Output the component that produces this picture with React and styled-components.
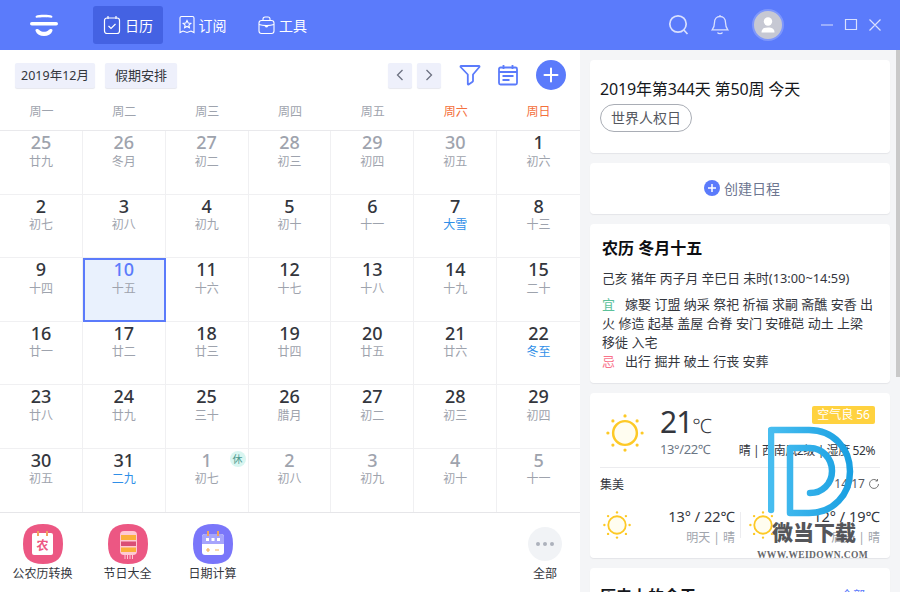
import React from 'react';
import styled, { createGlobalStyle } from 'styled-components';

const BLUE = '#5b7bfb';

const GlobalStyle = createGlobalStyle`
  html, body {
    margin: 0;
    padding: 0;
    width: 900px;
    height: 592px;
    overflow: hidden;
    background: #fff;
    font-family: "Noto Sans", "Noto Sans CJK SC", sans-serif;
    color: #33363d;
  }
  * { box-sizing: border-box; }
`;

const Page = styled.div`
  position: relative;
  width: 900px;
  height: 592px;
  overflow: hidden;
  display: flex;
  flex-direction: column;
`;

const TopBar = styled.header`
  height: 50px;
  flex: none;
  background: ${BLUE};
  display: flex;
  align-items: center;
  padding-left: 30px;
  color: #fff;
`;

const Logo = styled.svg`
  width: 28px;
  height: 24px;
  margin-right: 35px;
`;

const NavItem = styled.div`
  width: ${(p) => p.$w}px;
  height: 38px;
  border-radius: 3px;
  background: ${(p) => (p.$active ? '#4462e3' : 'transparent')};
  display: flex;
  align-items: center;
  justify-content: center;
  gap: 4px;
  font-size: 14px;
`;

const TopRight = styled.div`
  margin-left: auto;
  display: flex;
  align-items: center;
  padding-right: 19px;
`;

const SearchIcon = styled.svg`
  width: 22px;
  height: 24px;
  margin-right: 21px;
`;

const Avatar = styled.div`
  width: 32px;
  height: 32px;
  border-radius: 50%;
  background: #c6c8d3;
  border: 2px solid #7e97fb;
  display: flex;
  align-items: center;
  justify-content: center;
  margin: 0 37px 0 23px;
`;

const Body = styled.div`
  flex: 1;
  display: flex;
  min-height: 0;
`;

const Left = styled.main`
  width: 580px;
  flex: none;
  display: flex;
  flex-direction: column;
`;

const Toolbar = styled.div`
  height: 50px;
  flex: none;
  display: flex;
  align-items: center;
  padding: 0 14px 0 15px;
`;

const Tag = styled.div`
  height: 25px;
  width: ${(p) => p.$w}px;
  text-align: center;
  background: #eef0fb;
  border-radius: 2px;
  font-size: ${(p) => p.$size}px;
  line-height: 25px;
  margin-right: 10px;
  white-space: nowrap;
  box-shadow: 0 1px 1px #e6e7ee;
`;

const ArrowButton = styled.div`
  width: 24px;
  height: 25px;
  background: #eef0fb;
  border-radius: 2px;
  margin-left: ${(p) => p.$ml}px;
  display: flex;
  align-items: center;
  justify-content: center;
  box-shadow: 0 1px 1px #e6e7ee;
`;

const PlusButton = styled.div`
  width: 30px;
  height: 30px;
  border-radius: 50%;
  background: ${BLUE};
  margin-left: 17px;
  display: flex;
  align-items: center;
  justify-content: center;
`;

const Spacer = styled.div`
  flex: 1;
`;

const ToolIcon = styled.svg`
  width: 22px;
  height: 22px;
  margin-left: ${(p) => p.$ml}px;
`;

const Weekdays = styled.div`
  height: 31px;
  flex: none;
  display: grid;
  grid-template-columns: repeat(7, 1fr);
  border-bottom: 1px solid #e9e9ec;
`;

const Weekday = styled.div`
  text-align: center;
  font-size: 12px;
  line-height: 23px;
  color: ${(p) => (p.$weekend ? '#f4703c' : '#9ea3ad')};
`;

const Grid = styled.div`
  height: 382px;
  flex: none;
  display: grid;
  grid-template-columns: repeat(7, 1fr);
  grid-template-rows: repeat(6, 1fr);
  border-bottom: 1px solid #e6e6e9;
`;

const Cell = styled.div`
  position: relative;
  text-align: center;
  border-right: 1px solid #f0f0f2;
  border-bottom: 1px solid #f0f0f2;
  &:nth-child(7n) { border-right: none; }
  &:nth-last-child(-n + 7) { border-bottom: none; }
  ${(p) => p.$selected && `
    background: #e9f1fd;
    outline: 2px solid ${BLUE};
    outline-offset: -2px;
  `}
`;

const DayNumber = styled.div`
  font-size: 18px;
  line-height: 22px;
  font-weight: 500;
  color: ${(p) => (p.$selected ? BLUE : p.$muted ? '#9ea3ad' : '#33363d')};
`;

const Lunar = styled.div`
  margin-top: 0.5px;
  font-size: 12px;
  line-height: 16px;
  color: ${(p) => (p.$term ? '#2f8fe8' : '#9ea3ad')};
`;

const Rest = styled.div`
  position: absolute;
  top: 2px;
  right: 2px;
  width: 16px;
  height: 16px;
  border-radius: 50%;
  background: #d9f6f1;
  color: #4f9b90;
  font-size: 10px;
  line-height: 16px;
`;

const Shortcuts = styled.div`
  flex: 1;
  display: flex;
  padding-top: 11px;
`;

const Shortcut = styled.div`
  width: ${(p) => p.$w || 85}px;
  margin-left: ${(p) => (p.$end ? 'auto' : '0')};
  margin-right: ${(p) => (p.$end ? '10px' : '0')};
  display: flex;
  flex-direction: column;
  align-items: center;
  font-size: 12px;
  line-height: 17px;
  gap: 1px;
`;

const MoreCircle = styled.div`
  width: 34px;
  height: 34px;
  margin: 3px 0 3px;
  border-radius: 50%;
  background: #f1f3f6;
  display: flex;
  align-items: center;
  justify-content: center;
  gap: 3px;
`;

const Dot = styled.i`
  width: 4px;
  height: 4px;
  border-radius: 50%;
  background: #adb2bc;
`;

const Right = styled.aside`
  position: relative;
  flex: 1;
  background: #f4f5f7;
  padding: 10px 10px 0;
  display: flex;
  flex-direction: column;
  gap: 10px;
  overflow: hidden;
`;

const Thumb = styled.div`
  position: absolute;
  top: 0;
  right: 0;
  width: 4px;
  height: 327px;
  background: #c9c9c9;
`;

const Card = styled.section`
  flex: none;
  height: ${(p) => p.$h}px;
  background: #fff;
  border-radius: 4px;
  box-shadow: 0 1px 1px #e4e5e8;
  padding: ${(p) => p.$pad || '0'};
`;

const TodayLine = styled.div`
  font-size: 16px;
  line-height: 22px;
  letter-spacing: -0.15px;
  color: #15171c;
  white-space: nowrap;
`;

const Chip = styled.div`
  display: inline-block;
  height: 28px;
  margin-top: 4px;
  padding: 0 10px;
  border: 1px solid #a9adb5;
  border-radius: 14px;
  font-size: 14px;
  line-height: 26px;
  color: #55585f;
`;

const CreateRow = styled.div`
  height: 100%;
  display: flex;
  align-items: center;
  justify-content: center;
  gap: 4px;
  padding: 0 0 2px 4px;
  font-size: 14px;
  color: #6d7690;
`;

const LunarTitle = styled.div`
  font-size: 16px;
  line-height: 20px;
  font-weight: 700;
  color: #0d0e12;
`;

const LunarLine = styled.div`
  margin-top: 11px;
  font-size: 12.8px;
  line-height: 18px;
  white-space: nowrap;
`;

const Almanac = styled.div`
  margin-top: 8px;
  font-size: 13px;
  line-height: 19px;
`;

const Mark = styled.span`
  color: ${(p) => p.$c};
  margin-right: 10px;
`;

const WeatherTop = styled.div`
  height: 75px;
  display: flex;
  border-bottom: 1px solid #ececef;
`;

const SunBox = styled.div`
  width: 60px;
  display: flex;
  align-items: flex-start;
  padding-left: 6px;
  padding-top: 21px;
`;

const TempBlock = styled.div`
  display: flex;
  flex-direction: column;
  padding-top: 11px;
`;

const BigTemp = styled.div`
  font-size: 30px;
  line-height: 36px;
  letter-spacing: -1px;
  color: #33363d;
  white-space: nowrap;
  & small { font-size: 20px; line-height: 1; font-weight: 300; margin-left: 0; }
`;

const SubTemp = styled.div`
  font-size: 13px;
  line-height: 18px;
  letter-spacing: -0.4px;
  color: #6b7684;
`;

const WeatherSide = styled.div`
  margin-left: auto;
  margin-right: 5px;
  display: flex;
  flex-direction: column;
  align-items: flex-end;
  justify-content: space-between;
  padding-bottom: 7px;
  padding-top: 13px;
`;

const Badge = styled.div`
  height: 18px;
  padding: 0 5px;
  border-radius: 2px;
  background: #ffd23f;
  color: #fff;
  font-size: 12px;
  line-height: 18px;
`;

const WeatherText = styled.div`
  font-size: 12px;
  line-height: 18px;
  letter-spacing: -0.4px;
  white-space: nowrap;
`;

const PlaceRow = styled.div`
  display: flex;
  justify-content: space-between;
  align-items: center;
  height: 31px;
  font-size: 12px;
`;

const Clock = styled.div`
  display: flex;
  align-items: center;
  gap: 3px;
  color: #55585f;
`;

const Forecasts = styled.div`
  display: flex;
  padding-top: 13px;
`;

const Forecast = styled.div`
  flex: ${(p) => (p.$first ? '0 0 140px' : '1')};
  display: flex;
  align-items: center;
  justify-content: space-between;
  padding: ${(p) => (p.$first ? '0 5px 0 3px' : '0 0 0 8px')};
  border-left: ${(p) => (p.$first ? 'none' : '1px solid #ececef')};
  height: 26px;
`;

const ForecastText = styled.div`
  margin-top: 3px;
  text-align: right;
  font-size: 14.5px;
  line-height: 21px;
  white-space: nowrap;
  & span { display: block; font-size: 12px; line-height: 21px; color: #a1a5ad; }
`;

const HistoryHead = styled.div`
  display: flex;
  justify-content: space-between;
  align-items: center;
  font-size: 16px;
  font-weight: 700;
  color: #15171c;
  line-height: 22px;
  & span { font-size: 12px; font-weight: 400; color: ${BLUE}; margin-right: 5px; }
`;

const Watermark = styled.div`
  position: absolute;
  left: 757px;
  top: 425px;
  width: 112px;
  height: 166px;
  pointer-events: none;
`;

const WaterLogo = styled.svg`
  position: absolute;
  left: 11px;
  top: 0;
  width: 90px;
  height: 95px;
`;

const WaterTitle = styled.div`
  position: absolute;
  left: 15px;
  top: 90px;
  font-size: 21px;
  line-height: 34px;
  font-weight: 900;
  color: #55565a;
  white-space: nowrap;
`;

const WaterUrl = styled.div`
  position: absolute;
  left: 0;
  top: 123px;
  font-family: "Liberation Serif", serif;
  font-size: 9.5px;
  line-height: 14px;
  font-weight: 700;
  letter-spacing: 0.35px;
  color: #66676b;
  white-space: nowrap;
`;

const Sun = ({ size }) => {
  const rays = [0, 45, 90, 135, 180, 225, 270, 315];
  return (
    <svg width={size} height={size} viewBox="0 0 40 40">
      <circle cx="20" cy="20" r="12.5" fill="#fffdf0" stroke="#fdc926" strokeWidth="2.6" />
      {rays.map((a) => (
        <circle
          key={a}
          cx={20 + 18 * Math.cos((a * Math.PI) / 180)}
          cy={20 + 18 * Math.sin((a * Math.PI) / 180)}
          r="1.7"
          fill="#fdc926"
        />
      ))}
    </svg>
  );
};

const weeks = ['周一', '周二', '周三', '周四', '周五', '周六', '周日'];

const days = [
  [25, '廿九', 1], [26, '冬月', 1], [27, '初二', 1], [28, '初三', 1], [29, '初四', 1], [30, '初五', 1], [1, '初六'],
  [2, '初七'], [3, '初八'], [4, '初九'], [5, '初十'], [6, '十一'], [7, '大雪', 0, 1], [8, '十三'],
  [9, '十四'], [10, '十五'], [11, '十六'], [12, '十七'], [13, '十八'], [14, '十九'], [15, '二十'],
  [16, '廿一'], [17, '廿二'], [18, '廿三'], [19, '廿四'], [20, '廿五'], [21, '廿六'], [22, '冬至', 0, 1],
  [23, '廿八'], [24, '廿九'], [25, '三十'], [26, '腊月'], [27, '初二'], [28, '初三'], [29, '初四'],
  [30, '初五'], [31, '二九', 0, 1], [1, '初七', 1], [2, '初八', 1], [3, '初九', 1], [4, '初十', 1], [5, '十一', 1],
];

const Icons = {
  calendar: (
    <svg width="18" height="20" viewBox="0 0 18 20" fill="none" stroke="#fff" strokeWidth="1.2">
      <rect x="1.5" y="3" width="15" height="15.5" rx="2.5" />
      <path d="M5 1v3M13 1v3M5.5 11l2.500 2.500 4.500-4.500" />
    </svg>
  ),
  star: (
    <svg width="16" height="20" viewBox="0 0 16 20" fill="none" stroke="#fff" strokeWidth="1.1">
      <path d="M2.5 1.5h11a1.5 1.5 0 0 1 1.5 1.500v14.500l-3-1.500-4 1.500-4-1.500-3 1.500V3a1.500 1.500 0 0 1 1.500-1.500z" />
      <path d="M8 5.5l1.200 2.500 2.600.3-1.900 1.800.5 2.600L8 11.400l-2.400 1.300.5-2.600-1.900-1.800 2.600-.3z" />
    </svg>
  ),
  bag: (
    <svg width="17" height="19" viewBox="0 0 17 19" fill="none" stroke="#fff" strokeWidth="1.1">
      <rect x="1" y="4.5" width="15" height="13" rx="2.5" />
      <path d="M5 4.5V3a2 2 0 0 1 2-2h3a2 2 0 0 1 2 2v1.500M1 8.500c4 1.500 11 1.500 15 0M7 9.500c0 1.800 3 1.800 3 0" />
    </svg>
  ),
};

const App = () => (
  <Page>
    <GlobalStyle />
    <TopBar>
      <Logo viewBox="0 0 28 24" fill="#fff">
        <path d="M6.5 4.800c-1 0-1.300-1.500-.3-2C9 1.500 19 1.500 21.800 2.800c1 .5.7 2-.3 2-4-.8-11-.8-15 0z" />
        <rect x="0" y="9" width="28" height="3.600" rx="1.800" />
        <path d="M6.800 16c1.500 0 2 .5 3 1.500 1 .9 2.500 1.300 4.200 1.300s3.200-.4 4.200-1.300c1-1 1.500-1.500 3-1.500 1 0 1.600.9 1.200 2-1.200 3.200-4.400 5-8.400 5s-7.200-1.800-8.400-5c-.4-1.100.2-2 1.200-2z" />
      </Logo>
      <NavItem $w={70} $active>{Icons.calendar}日历</NavItem>
      <NavItem $w={79}>{Icons.star}订阅</NavItem>
      <NavItem $w={81}>{Icons.bag}工具</NavItem>
      <TopRight>
        <SearchIcon viewBox="0 0 22 24" fill="none" stroke="#d9e0fe" strokeWidth="1.7">
          <circle cx="10" cy="11" r="8.2" />
          <path d="M15.8 17l3.700 4" />
        </SearchIcon>
        <svg width="18" height="22" viewBox="0 0 18 22" fill="none" stroke="#d9e0fe" strokeWidth="1.3">
          <path d="M9 2.500c-3.400 0-5.500 2.700-5.500 6 0 3.300-.8 5.500-2.300 7.300h15.600c-1.500-1.800-2.300-4-2.300-7.300 0-3.300-2.100-6-5.500-6zM9 1v1.500M6.500 18.500c.7 1.600 4.300 1.600 5 0" />
        </svg>
        <Avatar>
          <svg width="18" height="18" viewBox="0 0 18 18" fill="#fff">
            <circle cx="9" cy="5.5" r="4.2" />
            <path d="M2.5 16.500c0-3.500 2-5 6.500-5s6.500 1.500 6.500 5z" />
          </svg>
        </Avatar>
        <svg width="60" height="14" viewBox="0 0 60 14" fill="none" stroke="#d9e0fe" strokeWidth="1.2">
          <path d="M0 7h12M24.500 1.500h11v10h-11zM48.500 1.500l11 11M59.500 1.500l-11 11" />
        </svg>
      </TopRight>
    </TopBar>
    <Body>
      <Left>
        <Toolbar>
          <Tag $w={80} $size={12.5}>2019年12月</Tag>
          <Tag $w={72} $size={13}>假期安排</Tag>
          <Spacer />
          <ArrowButton>
            <svg width="8" height="12" viewBox="0 0 8 12" fill="none" stroke="#6c7180" strokeWidth="1.3"><path d="M6.500 1L1.500 6l5 5" /></svg>
          </ArrowButton>
          <ArrowButton $ml={5}>
            <svg width="8" height="12" viewBox="0 0 8 12" fill="none" stroke="#6c7180" strokeWidth="1.3"><path d="M1.500 1l5 5-5 5" /></svg>
          </ArrowButton>
          <ToolIcon $ml={18} viewBox="0 0 22 22" fill="none" stroke={BLUE} strokeWidth="1.8" strokeLinejoin="round">
            <path d="M2 2h18c.5 0 .7.5.4 1L14 10.500V17c0 .3-.1.5-.4.7l-4 2.800c-.4.2-.8 0-.8-.5V10.500L1.600 3c-.3-.5-.1-1 .4-1z" />
          </ToolIcon>
          <ToolIcon $ml={16} viewBox="0 0 22 22" fill="none" stroke={BLUE} strokeWidth="1.8">
            <rect x="2" y="3.5" width="18" height="17" rx="1.5" />
            <path d="M2 8h18M6.500 1v4M15.500 1v4M5.500 12h11M5.500 16h7" />
          </ToolIcon>
          <PlusButton>
            <svg width="16" height="16" viewBox="0 0 16 16" stroke="#fff" strokeWidth="2" strokeLinecap="round"><path d="M8 1.500v13M1.500 8h13" /></svg>
          </PlusButton>
        </Toolbar>
        <Weekdays>
          {weeks.map((w, i) => <Weekday key={w} $weekend={i > 4}>{w}</Weekday>)}
        </Weekdays>
        <Grid>
          {days.map(([n, l, muted, term], i) => (
            <Cell key={i} $selected={i === 15}>
              <DayNumber $muted={muted} $selected={i === 15}>{n}</DayNumber>
              <Lunar $term={term}>{l}</Lunar>
              {i === 37 && <Rest>休</Rest>}
            </Cell>
          ))}
        </Grid>
        <Shortcuts>
          <Shortcut>
            <svg width="40" height="40" viewBox="0 0 40 40">
              <path d="M20 0c14 0 20 6 20 20s-6 20-20 20S0 34 0 20 6 0 20 0z" fill="#ec5783" />
              <rect x="9" y="9" width="21" height="22" rx="2" fill="#fff" />
              <path d="M15 7v5M24 7v5" stroke="#f0a35e" strokeWidth="2" />
              <text x="19.5" y="26" fontSize="12" fontWeight="700" textAnchor="middle" fill="#ec5783">农</text>
            </svg>
            公农历转换
          </Shortcut>
          <Shortcut>
            <svg width="40" height="40" viewBox="0 0 40 40">
              <path d="M20 0c14 0 20 6 20 20s-6 20-20 20S0 34 0 20 6 0 20 0z" fill="#ec5783" />
              <rect x="12" y="7" width="17" height="24" rx="4" fill="#ffc9d3" />
              <rect x="13" y="11" width="15" height="5" fill="#fbb03b" />
              <rect x="13" y="17.5" width="15" height="4.5" fill="#d94f75" />
              <rect x="13" y="23.5" width="15" height="4.5" fill="#fbb03b" />
              <path d="M17 31v4M19.500 31v4M22 31v4M24.500 31v4" stroke="#ffc9d3" />
            </svg>
            节日大全
          </Shortcut>
          <Shortcut>
            <svg width="40" height="40" viewBox="0 0 40 40">
              <path d="M20 0c14 0 20 6 20 20s-6 20-20 20S0 34 0 20 6 0 20 0z" fill="#7a76fa" />
              <rect x="9" y="10" width="22" height="21" rx="3" fill="#fff" />
              <path d="M9 13a3 3 0 0 1 3-3h16a3 3 0 0 1 3 3v7H9z" fill="#a6a4fc" />
              <path d="M15 7v5M25 7v5" stroke="#f0a35e" strokeWidth="2" />
              <path d="M13 14h3v3h-3zM18.500 14h3v3h-3zM24 14h3v3h-3z" fill="#fff" />
              <path d="M15 24v4M13 26h4M22 26h4" stroke="#f5b25c" strokeWidth="1.2" />
            </svg>
            日期计算
          </Shortcut>
          <Shortcut $w={50} $end>
            <MoreCircle><Dot /><Dot /><Dot /></MoreCircle>
            全部
          </Shortcut>
        </Shortcuts>
      </Left>
      <Right>
        <Thumb />
        <Card $h={93} $pad="18px 10px 0">
          <TodayLine>2019年第344天 第50周 今天</TodayLine>
          <Chip>世界人权日</Chip>
        </Card>
        <Card $h={51}>
          <CreateRow>
            <svg width="16" height="16" viewBox="0 0 16 16">
              <circle cx="8" cy="8" r="8" fill={BLUE} />
              <path d="M8 4v8M4 8h8" stroke="#fff" strokeWidth="1.5" />
            </svg>
            创建日程
          </CreateRow>
        </Card>
        <Card $h={159} $pad="14px 12px 0">
          <LunarTitle>农历 冬月十五</LunarTitle>
          <LunarLine>己亥 猪年 丙子月 辛巳日 未时(13:00~14:59)</LunarLine>
          <Almanac>
            <Mark $c="#5cc19a">宜</Mark>嫁娶 订盟 纳采 祭祀 祈福 求嗣 斋醮 安香 出火 修造 起基 盖屋 合脊 安门 安碓硙 动土 上梁 移徙 入宅
            <br />
            <Mark $c="#f9728a">忌</Mark>出行 掘井 破土 行丧 安葬
          </Almanac>
        </Card>
        <Card $h={165} $pad="0 10px">
          <WeatherTop>
            <SunBox><Sun size={38} /></SunBox>
            <TempBlock>
              <BigTemp>21<small>℃</small></BigTemp>
              <SubTemp>13°/22℃</SubTemp>
            </TempBlock>
            <WeatherSide>
              <Badge>空气良 56</Badge>
              <WeatherText>晴 | 西南风2级 | 湿度 52%</WeatherText>
            </WeatherSide>
          </WeatherTop>
          <PlaceRow>
            集美
            <Clock>
              14:17
              <svg width="12" height="12" viewBox="0 0 12 12" fill="none" stroke="#777" strokeWidth="1"><path d="M10.500 6a4.500 4.500 0 1 1-1.500-3.400M9.500 1v2h-2" /></svg>
            </Clock>
          </PlaceRow>
          <Forecasts>
            <Forecast $first>
              <Sun size={28} />
              <ForecastText>13° / 22℃<span>明天 | 晴</span></ForecastText>
            </Forecast>
            <Forecast>
              <Sun size={28} />
              <ForecastText>12° / 19℃<span>后天 | 晴</span></ForecastText>
            </Forecast>
          </Forecasts>
        </Card>
        <Card $h={60} $pad="17px 10px 0">
          <HistoryHead>历史上的今天<span>全部 &gt;</span></HistoryHead>
        </Card>
      </Right>
    </Body>
    <Watermark>
      <WaterLogo viewBox="0 0 90 95" fill="none" strokeLinecap="round">
        <defs>
          <linearGradient id="wd" x1="0" x2="1" y1="0" y2="0">
            <stop offset="0" stopColor="#47bdf0" />
            <stop offset="1" stopColor="#1aa0e2" />
          </linearGradient>
        </defs>
        <path d="M3 85V5h38c24 0 41 18 41 41.500S65 88 41 88H22V23h20c12 0 22 10 22 23s-10 22-22 22" stroke="url(#wd)" strokeWidth="6.5" strokeLinejoin="round" />
      </WaterLogo>
      <WaterTitle>微当下载</WaterTitle>
      <WaterUrl>WWW.WEIDOWN.COM</WaterUrl>
    </Watermark>
  </Page>
);

export default App;
